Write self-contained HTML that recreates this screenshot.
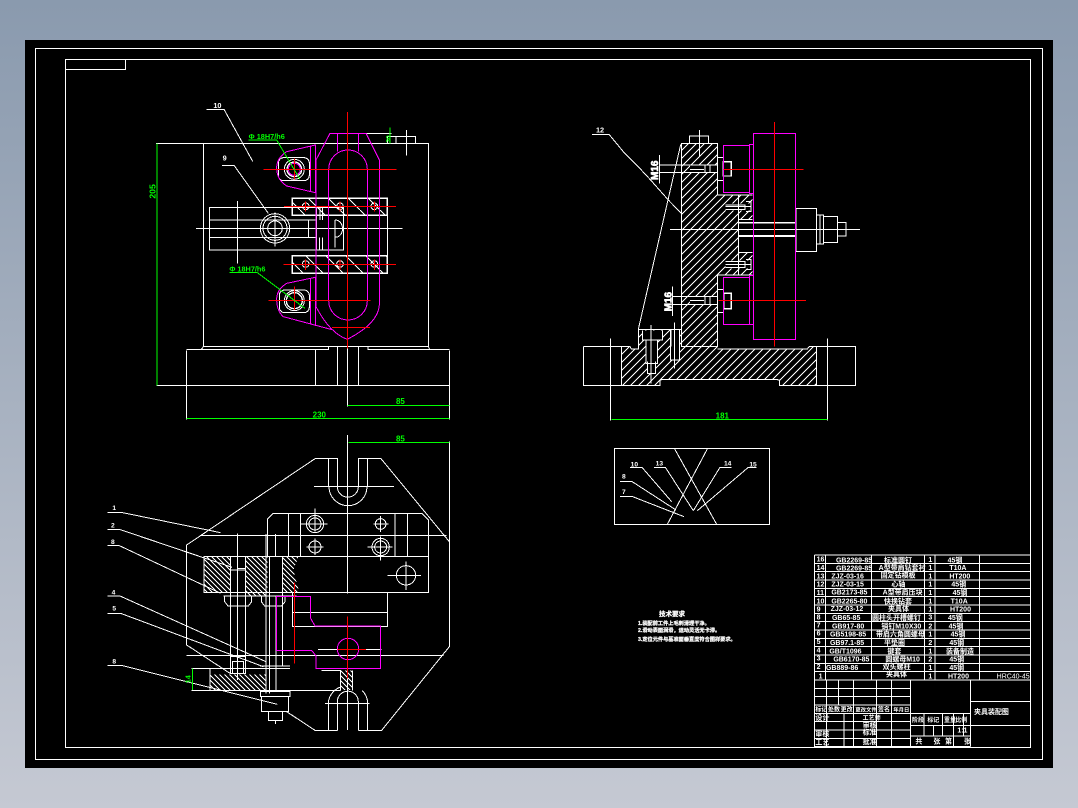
<!DOCTYPE html>
<html><head><meta charset="utf-8"><title>CAD</title>
<style>
html,body{margin:0;padding:0;width:1078px;height:808px;overflow:hidden;background:linear-gradient(180deg,#8a9aae 0%,#c5c9d3 100%)}
svg{display:block;position:absolute;left:0;top:0}
text{font-family:"Liberation Sans","Noto Sans CJK SC",sans-serif;fill:#fff;font-weight:700;stroke:none}
.g text,text.g{fill:#0f0}
</style></head><body>
<svg width="1078" height="808" viewBox="0 0 1078 808" xmlns="http://www.w3.org/2000/svg" fill="none" shape-rendering="crispEdges">
<defs>
<pattern id="h1" patternUnits="userSpaceOnUse" width="24" height="24"><path d="M0 24L24 0M-4 4L4 -4M20 28L28 20" stroke="#fff" stroke-width="2.4"/></pattern>
<pattern id="h2" patternUnits="userSpaceOnUse" width="15" height="15"><path d="M0 0L15 15M-4 11L4 19M11 -4L19 4" stroke="#fff" stroke-width="2.4"/></pattern>
<pattern id="h3" patternUnits="userSpaceOnUse" width="60" height="60"><path d="M0 0L60 60" stroke="#fff" stroke-width="2.4"/></pattern>
</defs>
<rect x="25" y="40" width="1028" height="728" fill="#000"/>
<rect x="35.5" y="48.5" width="1007" height="711" stroke="#fff"/>
<rect x="65.5" y="59.5" width="965" height="688" stroke="#fff"/>
<rect x="65.5" y="59.5" width="60" height="10" stroke="#fff"/>

<!-- TOP LEFT VIEW -->
<g transform="translate(140,90) scale(.33333)" stroke-width="3">
<g stroke="#fff">
<path d="M48 160H865V770H190V160M190 770L184 778M865 770L869 778M140 778H565V770M684 770V778H928M140 782V988M928 782V988M50 886H928M526 778V886M592 770V886M655 770V886M622 770V950"/>
<path d="M680 130H755M742 140H827V160M742 140V160M768 140V160M799 120V197"/>
<path d="M200 58H252L338 214M246 226H282L385 370"/>
<path d="M208 352H610V480H208ZM208 390H530M208 442H530M505 390V442M530 352V480M585 390C615 390 615 442 585 442M585 390V472M292 333V520M168 415H788M540 352V390M548 352V390M538 442V480M548 442V480"/>
<circle cx="405" cy="415" r="44"/><circle cx="405" cy="415" r="36"/><circle cx="405" cy="415" r="22"/>
<path d="M405 368V470M362 415H448"/>
<rect x="457" y="325" width="285" height="51" fill="url(#h3)" stroke-width="4"/>
<rect x="457" y="497" width="285" height="53" fill="url(#h3)" stroke-width="4"/>
<path d="M742 376V497"/>
<rect x="415" y="203" width="93" height="69" rx="16"/><rect x="418" y="600" width="90" height="68" rx="16"/>
<circle cx="463" cy="238" r="30"/><circle cx="463" cy="238" r="22" stroke-width="4"/>
<circle cx="463" cy="632" r="30"/><circle cx="463" cy="632" r="24" stroke-width="4"/>
<circle cx="497" cy="349" r="10"/><circle cx="600" cy="349" r="10"/><circle cx="703" cy="349" r="10"/>
<circle cx="497" cy="522" r="10"/><circle cx="600" cy="522" r="10"/><circle cx="703" cy="522" r="10"/>
</g>
<g stroke="#f0f">
<path d="M526 165L440 185Q408 205 410 238Q412 270 440 288L526 308ZM512 168V305"/>
<path d="M526 562L440 580Q408 600 410 632Q412 665 430 680L580 720M512 565V703M526 562V708"/>
<path d="M570 130H678L718 210V645Q715 700 622 748Q570 730 528 650V210ZM592 130V185M655 130V185"/>
<rect x="566" y="180" width="116" height="510" rx="58"/>
<circle cx="463" cy="238" r="18"/>
</g>
<path stroke="#f00" d="M622 66V775M370 238H770M385 631H692M432 349H768M430 523H768M576 712H690M463 205V268M463 590V660M497 335V365M600 335V365M703 335V365M497 508V540M600 508V540M703 508V540"/>
<g stroke="#0f0" class="g">
<path d="M51 160V886M139 986H928M622 946H928M325 150H410L480 268M268 548H352L495 655M750 112V160"/>
<text transform="translate(46,326) rotate(-90)" font-size="26">205</text>
<text x="768" y="942" font-size="24">85</text>
<text x="518" y="982" font-size="24">230</text>
<text x="326" y="147" font-size="22">Φ 18H7/h6</text>
<text x="268" y="544" font-size="22">Φ 18H7/h6</text>
<text transform="translate(752,158) rotate(-90)" font-size="20">30</text>
</g>
<text x="220" y="54" font-size="22">10</text>
<text x="248" y="212" font-size="22">9</text>
</g>

<!-- BOTTOM LEFT VIEW -->
<g transform="translate(100,430) scale(.33333)" stroke-width="3">
<rect x="312" y="380" width="80" height="108" fill="url(#h2)"/>
<rect x="436" y="380" width="66" height="118" fill="url(#h2)"/>
<path d="M548 380H596L580 420L598 488H548Z" fill="url(#h2)"/>
<rect x="329" y="733" width="171" height="48" fill="url(#h2)"/>
<rect x="722" y="722" width="35" height="58" fill="url(#h2)"/>
<g stroke="#fff">
<path d="M645 86L260 345V645L390 730M560 845L645 901H712M775 901H845L1048 650V335L843 86H775V170M803 86V170M645 86H712V170M685 86V170"/>
<path d="M642 170H882M687 170A57 57 0 0 0 801 170M712 170A31 31 0 0 0 775 170M742 15V490M742 560V900"/>
<path d="M502 380V268L520 250H965L985 270V380M300 316H1040M565 250V380M602 250V380M885 250V380M922 250V380M412 310V750M526 312V380M498 312V380"/>
<circle cx="645" cy="282" r="26"/><circle cx="645" cy="282" r="18"/><path d="M645 235V305M602 282H682"/>
<circle cx="842" cy="282" r="16"/><path d="M842 258V306M820 282H866"/>
<circle cx="645" cy="351" r="18"/><path d="M645 325V375M620 351H670"/>
<circle cx="842" cy="351" r="26"/><circle cx="842" cy="351" r="18"/><path d="M842 320V392M802 351H878"/>
<path d="M312 380H985V488H312Z"/>
<circle cx="918" cy="436" r="29"/><path d="M918 395V480M862 436H963"/>
<path d="M578 488V590H862V488M578 548H862M654 658H845"/>
<path d="M260 677H1030"/>
<path d="M275 715H570M665 722H722V782M757 722V782M275 781H722M330 716V781"/>
<path d="M392 380V705M412 416H436M436 380V680M498 380V790M528 500V780M548 380V710M392 420H436M508 380V790M370 498H590"/>
<path d="M374 498V515L384 528H445L455 515V498M484 498V515L494 528H545L555 515V498"/>
<path d="M392 680H436V730H392ZM398 695H430V730H398ZM480 708H570"/>
<path d="M482 785H570V800H482ZM485 800H565V845H485ZM505 845H548V872H505ZM527 872V882"/>
<path d="M685 901V815A58 58 0 0 1 724 770M712 901V815A31 31 0 0 1 775 815V901M803 901V815A58 58 0 0 0 787 782M675 820H808"/>
<path d="M1048 35V335"/>
<path d="M22 248H68L362 308M22 298H58L396 412M22 346H56L362 490M22 498H60L498 695M22 550H62L490 710M22 706H64L532 823"/>
</g>
<g stroke="#f0f"><path d="M529 499H632V565L645 588H842V716H648V678L635 661H529Z"/><circle cx="744" cy="657" r="32"/></g>
<path stroke="#f00" d="M583 458V700M742 560V745M712 658H798"/>
<g stroke="#0f0" class="g"><path d="M745 38H1048M277 715V780"/>
<text x="888" y="34" font-size="24">85</text>
<text transform="translate(272,760) rotate(-90)" font-size="22">14</text></g>
<text x="37" y="240" font-size="20">1</text><text x="33" y="293" font-size="20">2</text><text x="33" y="342" font-size="20">8</text><text x="35" y="494" font-size="20">4</text><text x="37" y="542" font-size="20">5</text><text x="37" y="700" font-size="20">8</text>
</g>

<!-- TOP RIGHT VIEW -->
<g transform="translate(570,110) scale(.33333)" stroke-width="3">
<path d="M334 100H442V255H505V495H442V710H334Z" fill="url(#h1)"/>
<path d="M155 710H180L184 717H205V658H333V710H442V717H712L718 710H740V826H628V810L615 808H280L270 810V826H155Z" fill="url(#h1)"/>
<rect x="505" y="255" width="43" height="73" fill="url(#h1)"/>
<rect x="505" y="427" width="43" height="70" fill="url(#h1)"/>
<path fill="#000" d="M218 662H278V690H262V760H256V790H232V760H228V690H218ZM301 658H328V750H301ZM360 165H442V188H360ZM360 560H442V583H360ZM466 280H548V302H466ZM466 452H548V475H466Z"/>
<g stroke="#fff">
<path d="M334 100H442V255H505V495H442V710H334ZM358 100V78H416V100M388 60V140M442 142H460V212H442M442 538H460V608H442"/>
<path d="M40 710H180L184 717H205V658H333M442 717H712L718 710H856V826H628V810L615 808H280L270 810V826H40V710M155 710V826M740 710V826M121 685V932M772 685V932"/>
<path d="M442 255H548M442 495H548M505 328H548M505 427H548"/>
<path stroke-width="5" d="M505 338H678M505 378H678"/>
<path d="M300 358H870M678 295H740V425H678ZM740 315H760V402H740ZM750 316V402M760 320H803V398H760ZM803 338H828V378H803Z"/>
<path stroke-width="4" d="M460 155H484V198H460ZM462 550H484V596H462Z"/>
<path d="M268 165H442M268 188H442M268 135V220M308 560H442M308 583H442M308 530V618M360 178H402M405 165V188H420V165M360 572H402M405 560V583H420V560"/>
<path d="M466 290H545M466 285H525V298H466M528 275H543V305H528M466 463H545M466 455H525V472H466M528 448H543V478H528"/>
<path d="M332 104L205 658M66 73H117L160 125L200 165L240 208L295 270L334 310"/>
<path d="M205 658H303V710M218 662V690H278V662M228 690V760H262V690M232 755V790H256V755M243 645V820M301 658V750H328V658M314 637V775"/>
</g>
<text transform="translate(264,210) rotate(-90)" font-size="30" style="stroke:#fff;stroke-width:2">M16</text>
<text transform="translate(305,604) rotate(-90)" font-size="30" style="stroke:#fff;stroke-width:2">M16</text>
<g stroke="#f0f">
<rect x="550" y="70" width="127" height="618"/><rect x="460" y="106" width="78" height="142"/><rect x="538" y="103" width="12" height="147"/>
<rect x="460" y="502" width="78" height="141"/><rect x="538" y="497" width="12" height="146"/>
</g>
<path stroke="#f00" d="M613 36V710M460 178H700M445 571H708"/>
<g stroke="#0f0" class="g"><path d="M124 929H772"/><text x="437" y="925" font-size="24">181</text></g>
<text x="78" y="68" font-size="22">12</text>
</g>

<!-- LEADER BOX -->
<g transform="translate(600,440) scale(.33333)" stroke-width="3" stroke="#fff">
<rect x="43" y="25" width="466" height="228"/>
<path d="M223 25L350 253M323 25L202 253M90 82H126L215 185M162 82H196L280 212M394 82H360L280 212M470 82H445L292 212M60 124H95L228 210M60 170H98L252 230"/>
<g stroke="none"><text x="92" y="79" font-size="20">10</text><text x="167" y="77" font-size="20">13</text><text x="372" y="77" font-size="20">14</text><text x="448" y="79" font-size="20">15</text><text x="66" y="116" font-size="20">8</text><text x="66" y="162" font-size="20">7</text></g>
</g>

<!-- TECH REQ -->
<g font-size="5.2">
<text x="659" y="616" font-size="6.5" style="stroke:#fff;stroke-width:.25">技术要求</text>
<text x="638" y="625" style="stroke:#fff;stroke-width:.25">1.装配前工件上毛刺清理干净。</text>
<text x="638" y="632" style="stroke:#fff;stroke-width:.25">2.滑动表面润滑，运动灵活无卡滞。</text>
<text x="638" y="641" style="stroke:#fff;stroke-width:.25">3.定位元件与基准面垂直度符合图样要求。</text>
</g>

<!-- TITLE BLOCK -->
<g transform="translate(810,550) scale(.33333)" stroke-width="3" stroke="#fff">
<path d="M14 15H661M14 40H661M14 65H661M14 90H661M14 115H661M14 140H661M14 165H661M14 190H661M14 215H661M14 240H661M14 265H661M14 290H661M14 315H661M14 340H661M14 365H661M14 390H661"/>
<path d="M14 15V590H482M46 15V390M184 15V390M344 15V390M375 15V390M508 15V390"/>
<path d="M14 415H302M14 440H302M14 465H302M14 490H302M14 515H302M14 540H302M14 565H302"/>
<path d="M50 390V590M85 390V465M102 490V590M130 390V590M200 390V590M245 390V590M302 390V590M482 390V590"/>
<path d="M482 455H661M302 490H482M302 527H661M302 558H482M342 490V558M370 527V558M398 490V558M430 490V590M460 490V558"/>
<g stroke="none" font-size="21">
<text x="20" y="35">16</text><text x="78" y="37">GB2269-85</text><text x="222" y="37">标准圆钉</text><text x="355" y="36">1</text><text x="413" y="37">45钢</text>
<text x="20" y="60">14</text><text x="78" y="62">GB2269-85</text><text x="206" y="60">A型带肩钻套衬</text><text x="355" y="60">1</text><text x="418" y="60">T10A</text>
<text x="20" y="85">13</text><text x="64" y="85">ZJZ-03-16</text><text x="212" y="82">固定钻模板</text><text x="355" y="85">1</text><text x="418" y="85">HT200</text>
<text x="20" y="110">12</text><text x="64" y="110">ZJZ-03-15</text><text x="244" y="110">心轴</text><text x="355" y="110">1</text><text x="424" y="110">45钢</text>
<text x="20" y="135">11</text><text x="64" y="133">GB2173-85</text><text x="218" y="133">A型带肩压块</text><text x="355" y="135">1</text><text x="428" y="135">45钢</text>
<text x="20" y="160">10</text><text x="64" y="160">GB2265-80</text><text x="222" y="160">快换钻套</text><text x="355" y="160">1</text><text x="422" y="160">T10A</text>
<text x="20" y="185">9</text><text x="62" y="183">ZJZ-03-12</text><text x="234" y="183">夹具体</text><text x="355" y="185">1</text><text x="420" y="185">HT200</text>
<text x="20" y="208">8</text><text x="66" y="210">GB65-85</text><text x="186" y="210">圆柱头开槽螺钉</text><text x="355" y="208">3</text><text x="414" y="210">45钢</text>
<text x="20" y="232">7</text><text x="66" y="235">GB917-80</text><text x="214" y="235">销钉M10X30</text><text x="355" y="235">2</text><text x="416" y="235">45钢</text>
<text x="20" y="257">6</text><text x="60" y="260">GB5198-85</text><text x="198" y="260">带肩六角圆螺母</text><text x="355" y="260">1</text><text x="422" y="260">45钢</text>
<text x="20" y="282">5</text><text x="60" y="285">GB97.1-85</text><text x="222" y="285">平垫圈</text><text x="355" y="285">2</text><text x="418" y="285">45钢</text>
<text x="20" y="307">4</text><text x="58" y="310">GB/T1096</text><text x="232" y="310">键套</text><text x="355" y="310">1</text><text x="408" y="310">装备制造</text>
<text x="20" y="332">3</text><text x="70" y="335">GB6170-85</text><text x="226" y="335">圆螺母M10</text><text x="355" y="335">2</text><text x="418" y="335">45钢</text>
<text x="20" y="357">2</text><text x="48" y="360">GB889-86</text><text x="218" y="357">双头螺柱</text><text x="355" y="360">1</text><text x="418" y="360">45钢</text>
<text x="26" y="386">1</text><text x="228" y="380">夹具体</text><text x="355" y="385">1</text><text x="414" y="385">HT200</text>
<text x="560" y="386" style="font-weight:400">HRC40-45</text>
<text x="16" y="484" font-size="18">标记</text><text x="54" y="484" font-size="18">处数</text><text x="92" y="484" font-size="18">更改</text><text x="136" y="484" font-size="16">更改文件</text><text x="204" y="484" font-size="18">签名</text><text x="250" y="484" font-size="16">年月日</text>
<text x="16" y="510">设计</text><text x="158" y="510" font-size="18">工艺师</text><text x="158" y="532">审核</text><text x="158" y="554">标准</text><text x="16" y="558">审核</text><text x="16" y="584">工艺</text><text x="158" y="582">批准</text>
<text x="306" y="516" font-size="18">阶段</text><text x="352" y="516" font-size="18">标记</text><text x="402" y="516" font-size="18">重量</text><text x="436" y="516" font-size="18">比例</text>
<text x="442" y="548">1:1</text>
<text x="316" y="580">共</text><text x="370" y="580">张</text><text x="405" y="580">第</text><text x="462" y="580">张</text>
<text x="492" y="492">夹具装配图</text>
</g>
</g>
</svg>
</body></html>
